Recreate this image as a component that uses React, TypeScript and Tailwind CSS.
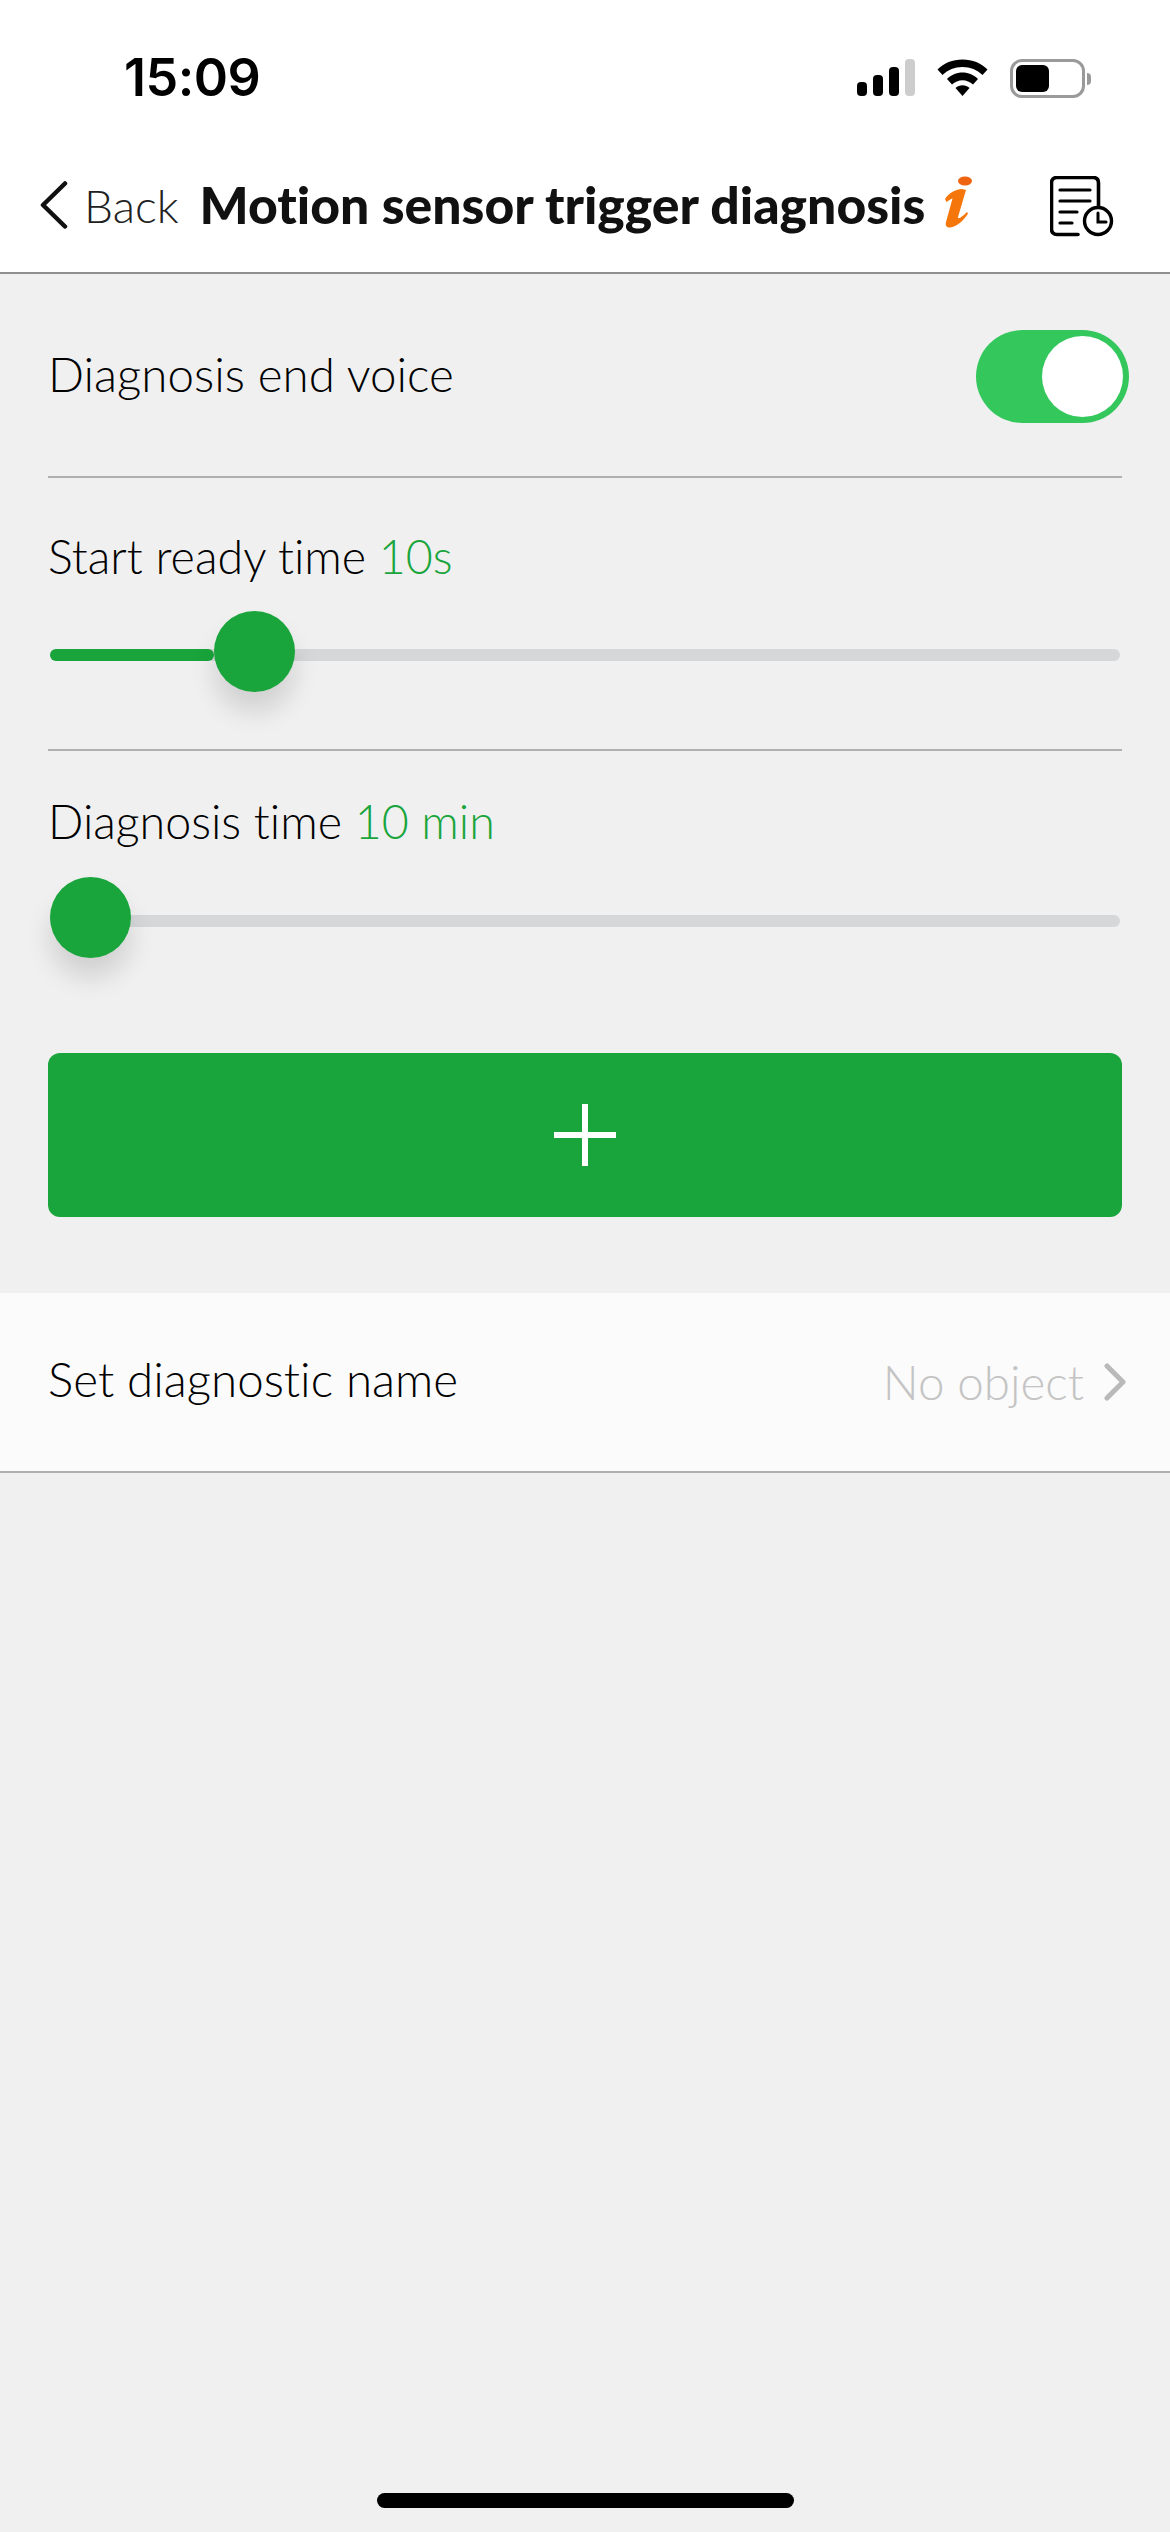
const font = "font-['Lato','Liberation_Sans',sans-serif] [font-variant-ligatures:none]"

function SignalIcon() {
  return (
    <svg width="58" height="37" viewBox="0 0 58 37">
      <rect x="0" y="23" width="10" height="14" rx="4" fill="#000" />
      <rect x="16" y="16" width="10" height="21" rx="4" fill="#000" />
      <rect x="32" y="8" width="10" height="29" rx="4" fill="#000" />
      <rect x="48" y="0" width="10" height="37" rx="4" fill="#cdcdcd" />
    </svg>
  )
}

function WifiIcon() {
  return (
    <svg width="51" height="37" viewBox="0 0 51 37">
      <path d="M0.5 10.5C7 4 15.5 0.5 25.5 0.5C35.5 0.5 44 4 50.5 10.5L45.5 16C40 10.8 33.5 8 25.5 8C17.5 8 11 10.8 5.5 16Z" fill="#000" />
      <path d="M10 20C14 16 19.5 13.5 25.5 13.5C31.5 13.5 37 16 41 20L36 25.5C33 22.8 29.5 21.2 25.5 21.2C21.5 21.2 18 22.8 15 25.5Z" fill="#000" />
      <path d="M18.5 29C20.5 27.2 23 26.2 25.5 26.2C28 26.2 30.5 27.2 32.5 29L25.5 37Z" fill="#000" />
    </svg>
  )
}

function BatteryIcon() {
  return (
    <div className="flex items-center">
      <div className="w-[75px] h-[39px] rounded-[12px] border-[3px] border-[#9a9a9a] p-[3px]">
        <div className="w-[33px] h-full rounded-[6px] bg-black" />
      </div>
      <div className="w-[4px] h-[12px] ml-[2px] rounded-r-full bg-[#9a9a9a]" />
    </div>
  )
}

function InfoIcon() {
  return (
    <svg width="30" height="52" viewBox="0 0 30 52">
      <ellipse cx="21" cy="5" rx="7" ry="4.5" fill="#ee6411" />
      <path d="M1 23C5 17 11 13.5 18 13L22 14L14 41C14 42.5 15 42.5 16.5 41.5C19 40 21 38 23 36L24 37.5C20 44 13 51 6 51.5C2.5 51.5 1 49.5 2 46L8.5 22.5C6.5 23 4.5 24.5 2.5 26Z" fill="#f5760a" />
    </svg>
  )
}

function HistoryIcon() {
  return (
    <svg width="64" height="61" viewBox="0 0 64 61" fill="none" stroke="#000" strokeLinecap="round">
      <path d="M28 58.5H7C3.5 58.5 1.5 56.5 1.5 53V7C1.5 3.5 3.5 1.5 7 1.5H43C46.5 1.5 48.5 3.5 48.5 7V31" strokeWidth="3.6" />
      <path d="M10 14H40M10 25H40M10 36H27M10 47H22" strokeWidth="3.2" />
      <circle cx="48" cy="45" r="13.5" strokeWidth="3.4" />
      <path d="M48 37V46H56" strokeWidth="3" />
    </svg>
  )
}

function ValueSlider({ filled, className }: { filled: number; className: string }) {
  return (
    <div className={`relative mx-[2px] h-[12px] rounded-full bg-[#d6d7d9] ${className}`}>
      <div className="h-full rounded-full bg-[#19a53b]" style={{ width: filled }} />
      <div
        className="absolute top-[-38px] w-[81px] h-[81px] rounded-full bg-[#19a53b] shadow-[0_20px_26px_rgba(0,0,0,0.13)]"
        style={{ left: filled }}
      />
    </div>
  )
}

export default function App() {
  return (
    <div className={`w-[1170px] h-[2532px] flex flex-col bg-[#f0f0f0] text-black ${font}`}>
      <header className="h-[274px] bg-white border-b-[2px] border-[#8f8f8f]">
        <div className="h-[155px] flex items-start justify-between pt-[58px] pl-[124px] pr-[79px]">
          <span className="font-['Inter',sans-serif] text-[52px] leading-[40px] font-semibold tracking-[-0.5px]">15:09</span>
          <div className="flex items-start pt-[1px]">
            <SignalIcon />
            <div className="w-[22px]" />
            <WifiIcon />
            <div className="w-[22px]" />
            <BatteryIcon />
          </div>
        </div>
        <div className="flex items-center h-[100px] pl-[40px]">
          <svg width="28" height="48" viewBox="0 0 28 48" fill="none" stroke="#111" strokeWidth="4.5" strokeLinecap="round" strokeLinejoin="round">
            <path d="M25 2.5L3 24L25 45.5" />
          </svg>
          <span className="ml-[16px] text-[46px] font-light text-[#222]">Back</span>
          <span className="ml-[21px] text-[51.7px] font-black text-[#111] whitespace-nowrap">Motion sensor trigger diagnosis</span>
          <div className="ml-[19px] -mt-[6px]"><InfoIcon /></div>
          <div className="ml-[76px] mt-[2px]"><HistoryIcon /></div>
        </div>
      </header>

      <section className="px-[48px]">
        <div className="flex items-center justify-between h-[204px] pt-[3px] border-b-[2px] border-[#b0b0b0]">
          <span className="-mt-[6px] text-[47.5px] font-light">Diagnosis end voice</span>
          <div className="flex items-center justify-end w-[153px] h-[93px] -mr-[7px] pr-[6px] rounded-full bg-[#34c75c]">
            <div className="w-[81px] h-[81px] rounded-full bg-white" />
          </div>
        </div>

        <div className="h-[273px] pt-[50px] border-b-[2px] border-[#b0b0b0]">
          <p className="text-[46.6px] leading-[56px] font-light">
            Start ready time <span className="text-[#19a53b]">10s</span>
          </p>
          <ValueSlider filled={164} className="mt-[65px]" />
        </div>

        <div className="pt-[42px]">
          <p className="text-[46.6px] leading-[56px] font-light">
            Diagnosis time <span className="text-[#19a53b]">10 min</span>
          </p>
          <ValueSlider filled={0} className="mt-[66px]" />
        </div>

        <div className="mt-[126px] h-[164px] flex items-center justify-center rounded-[12px] bg-[#19a53b]">
          <svg width="62" height="62" viewBox="0 0 62 62" stroke="#fff" strokeWidth="6">
            <path d="M31 0V62M0 31H62" />
          </svg>
        </div>
      </section>

      <div className="mt-[76px] h-[180px] flex items-center justify-between pl-[48px] pr-[44px] bg-[#fbfbfb] border-b-[2px] border-[#b0b0b0]">
        <span className="-mt-[6px] text-[47.5px] font-light">Set diagnostic name</span>
        <div className="flex items-center">
          <span className="text-[47.5px] font-light text-[#c4c4c4]">No object</span>
          <svg className="ml-[20px]" width="22" height="38" viewBox="0 0 22 38" fill="none" stroke="#b9b9b9" strokeWidth="5" strokeLinecap="round" strokeLinejoin="round">
            <path d="M3 3L19 19L3 35" />
          </svg>
        </div>
      </div>

      <div className="flex-1 flex items-end justify-center pb-[24px]">
        <div className="w-[417px] h-[15px] rounded-full bg-black" />
      </div>
    </div>
  )
}
